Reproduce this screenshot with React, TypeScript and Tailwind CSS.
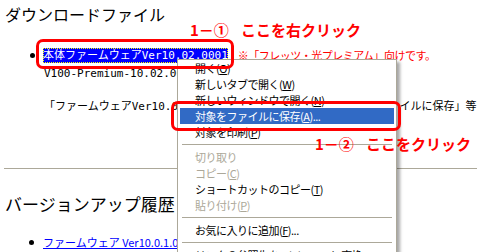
import type { ReactNode } from 'react'

// IE6 風の右クリックメニュー説明画面（注釈つき）

const JP = "font-['Noto_Sans_CJK_JP',sans-serif]"
const MONO = "font-['DejaVu_Sans_Mono','Noto_Sans_CJK_JP',monospace]"

type Item = { label: string; key?: string; tail?: string; off?: boolean; on?: boolean } | 'sep'

const MENU: Item[] = [
  { label: '開く', key: 'O' },
  { label: '新しいタブで開く', key: 'W' },
  { label: '新しいウィンドウで開く', key: 'N' },
  { label: '対象をファイルに保存', key: 'A', tail: '...', on: true },
  { label: '対象を印刷', key: 'P' },
  'sep',
  { label: '切り取り', off: true },
  { label: 'コピー', key: 'C', off: true },
  { label: 'ショートカットのコピー', key: 'T' },
  { label: '貼り付け', key: 'P', off: true },
  'sep',
  { label: 'お気に入りに追加', key: 'F', tail: '...' },
  'sep',
  { label: 'リンクの参照先をAdobe PDFに変換' },
]

function Note({ n, text }: { n: ReactNode; text: string }) {
  return (
    <div className={`${JP} flex gap-[12px] whitespace-nowrap text-[15px] font-bold leading-[18px] text-[#ff0000]`}>
      <span>1－{n}</span>
      <span>{text}</span>
    </div>
  )
}

export default function App() {
  return (
    <div className="relative h-[252px] w-[477px] overflow-hidden bg-white text-black">
      <h2 className={`${JP} ml-[5px] mt-[4px] text-[16px] leading-[20px]`}>ダウンロードファイル</h2>

      <div className="ml-[30px] mt-[24px] flex h-[15px] items-center whitespace-nowrap">
        <span className="size-[5px] rounded-full bg-black" />
        <a className={`${MONO} ml-[8px] h-[15px] bg-[#0000ff] text-[11px] leading-[15px] text-white outline-1 outline-dotted outline-[#ffff00] -outline-offset-1`}>
          本体ファームウェアVer10.02.0001
        </a>
        <span className={`${JP} ml-[10px] text-[11px] leading-[15px] tracking-[-0.5px] text-[#ff0000]`}>
          ※「フレッツ・光プレミアム」向けです。
        </span>
      </div>
      <p className={`${MONO} ml-[44px] mt-[3px] h-[15px] whitespace-nowrap text-[11px] leading-[15px]`}>
        V100-Premium-10.02.0001.bin
      </p>
      <p className={`${MONO} ml-[44px] mt-[18px] h-[15px] whitespace-nowrap text-[11px] leading-[15px]`}>
        「ファームウェアVer10.02.0001」を右クリックして、 「対象をファイルに保存」等で保存してください。
      </p>

      <div className="ml-[4px] mt-[54px] h-px bg-[#aca899]" />

      <h2 className={`${JP} ml-[5px] mt-[24px] text-[17px] leading-[21px]`}>バージョンアップ履歴</h2>
      <div className="ml-[29px] mt-[21px] flex h-[15px] items-center whitespace-nowrap">
        <span className="size-[5px] rounded-full bg-black" />
        <a className={`${JP} ml-[9px] text-[11px] leading-[15px] text-[#0000ff] underline`}>
          ファームウェア Ver10.0.1.0001 の変更点
        </a>
      </div>

      {/* コンテキストメニュー */}
      <div className={`${JP} absolute left-[177px] top-[59px] w-[220px] border border-[#aca899] bg-white px-[2px] shadow-[3px_3px_3px_rgba(0,0,0,0.35)]`}>
        {MENU.map((m, i) =>
          m === 'sep' ? (
            <div key={i} className="mx-[2px] my-[4px] h-px bg-[#aca899]" />
          ) : (
            <div key={i}
              className={`h-[16px] whitespace-nowrap pl-[15px] text-[11px] leading-[16px] tracking-[-0.5px] ${
                m.on ? 'bg-[#316ac5] text-white' : m.off ? 'text-[#aca899]' : 'text-black'}`}>
              {m.label}
              {m.key && <>(<u>{m.key}</u>)</>}
              {m.tail}
            </div>
          ),
        )}
      </div>

      {/* 注釈 */}
      <div className="absolute left-[36px] top-[39px] h-[30px] w-[198px] rounded-[7px] border-[3px] border-[#ff0000]" />
      <div className="absolute left-[171px] top-[101px] h-[30px] w-[230px] rounded-[7px] border-[3px] border-[#ff0000]" />
      <div className="absolute left-[190px] top-[21px]"><Note n="①" text="ここを右クリック" /></div>
      <div className="absolute left-[315px] top-[135px]"><Note n="②" text="ここをクリック" /></div>
    </div>
  )
}
